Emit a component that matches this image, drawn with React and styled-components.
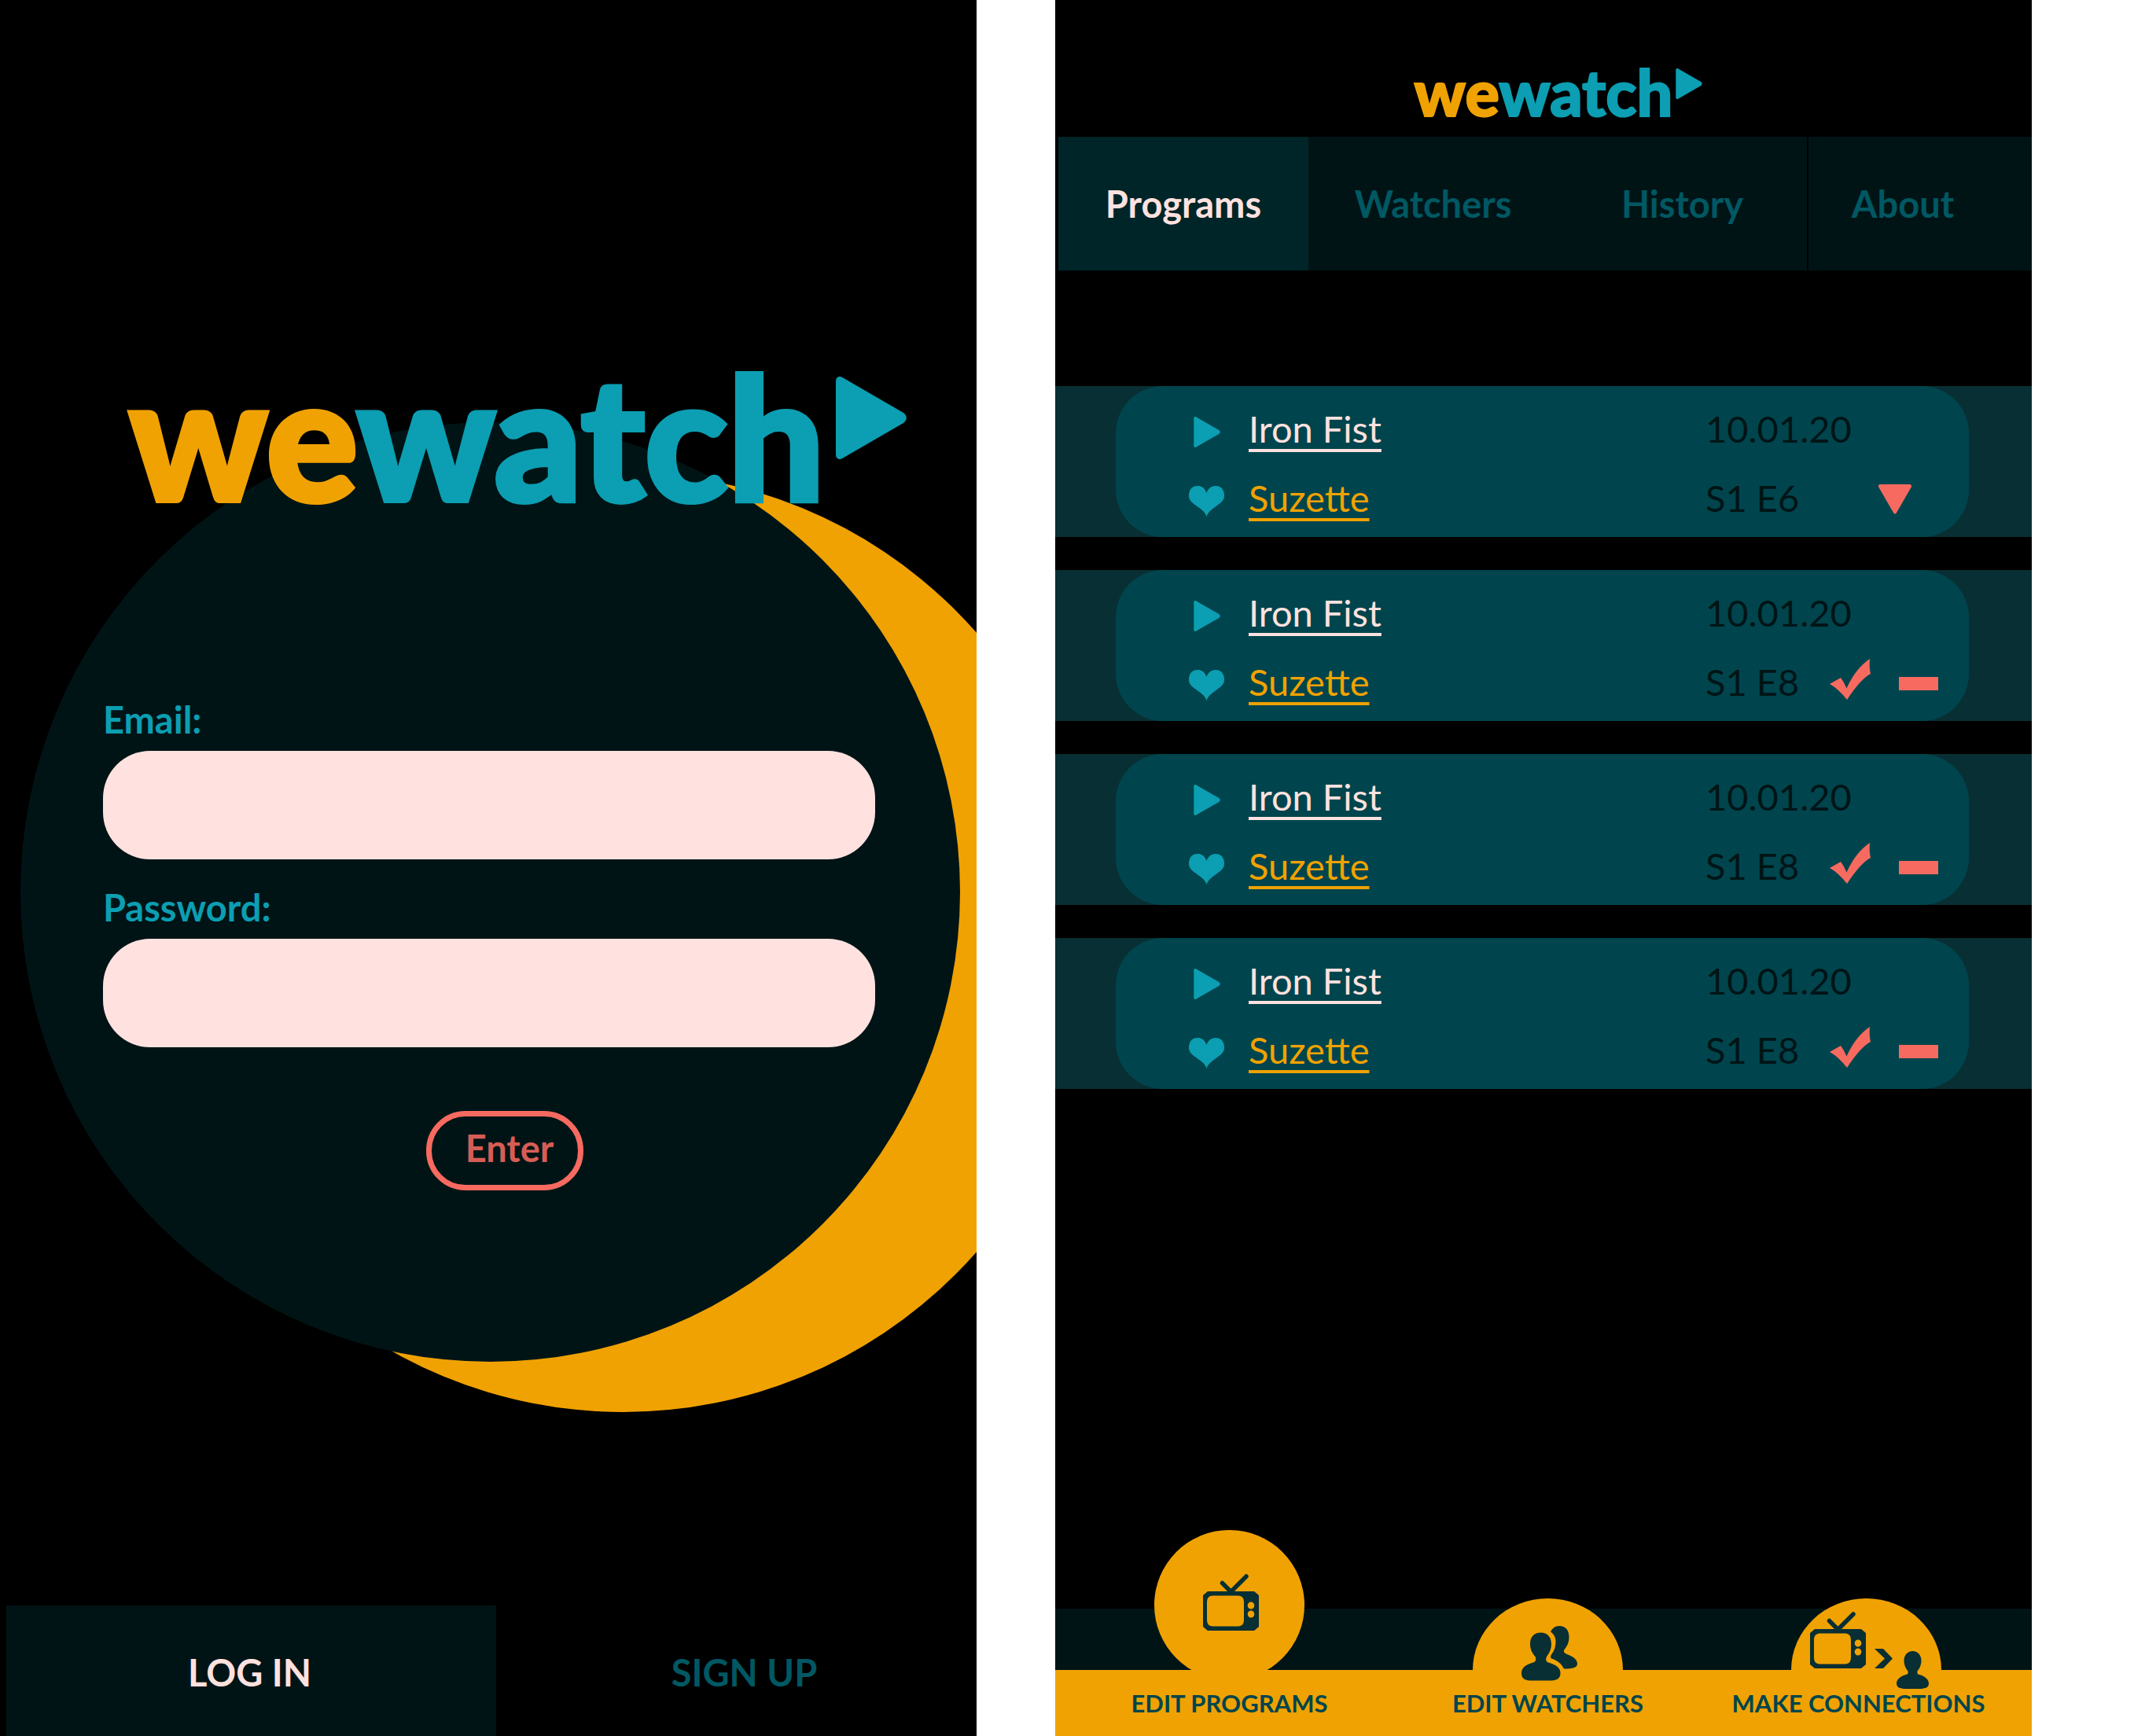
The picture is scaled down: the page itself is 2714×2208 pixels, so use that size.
import React from "react";
import styled, { createGlobalStyle, ThemeProvider } from "styled-components";

const theme = {
  ink: "#001416",
  strip: "#082f33",
  card: "#00454d",
  tab: "#002529",
  muted: "#005863",
  teal: "#0c9eb2",
  blush: "#ffe2df",
  coral: "#f76a60",
  coralDim: "#d65d55",
  amber: "#f0a202",
};

const GlobalStyle = createGlobalStyle`
  * { box-sizing: border-box; }
  body { margin: 0; background: #fff; font-family: Lato, "Open Sans", sans-serif; }
  button, input { font: inherit; }
  svg { display: block; flex: none; }
`;

const Page = styled.div`
  display: flex;
  gap: 100px;
  min-height: 100vh;
  padding-right: 130px;
`;

const Screen = styled.main`
  flex: 1;
  min-width: 0;
  display: flex;
  flex-direction: column;
  overflow: hidden;
  background: #000;
  font-size: 47px;
  line-height: 54px;
`;

/* ---------- logo ---------- */

const LogoRow = styled.div`
  position: relative;
  display: flex;
  justify-content: center;
  gap: ${(p) => (p.$large ? 14 : 4)}px;
  padding-left: ${(p) => (p.$large ? 70 : 38)}px;
`;

const Wordmark = styled.h1`
  margin: 0;
  font-size: ${(p) => (p.$large ? 218 : 81)}px;
  line-height: 1;
  font-weight: 900;
  color: ${(p) => p.theme.teal};
  -webkit-text-stroke: ${(p) => (p.$large ? 6 : 2)}px currentColor;
`;

const We = styled.span`
  color: ${(p) => p.theme.amber};
`;

const LogoArrow = styled.span`
  padding-top: ${(p) => (p.$large ? 35 : 11)}px;
`;

const PlayIcon = ({ width = 34, height = 39 }) => (
  <svg width={width} height={height} viewBox="0 0 90 105" fill={theme.teal} aria-hidden="true">
    <path d="M0 6C0 0 5 -2 10 2L86 46C91 50 91 55 86 59L10 103C5 107 0 105 0 99Z" />
  </svg>
);

function Logo({ large }) {
  return (
    <LogoRow $large={large}>
      <Wordmark $large={large}>
        <We>we</We>watch
      </Wordmark>
      <LogoArrow $large={large}>
        {large ? <PlayIcon width={90} height={105} /> : <PlayIcon />}
      </LogoArrow>
    </LogoRow>
  );
}

/* ---------- login screen ---------- */

const LoginBody = styled.div`
  padding: 444px 21px 0 26px;
`;

const Moon = styled.form`
  display: flex;
  flex-direction: column;
  gap: 34px;
  width: 100%;
  aspect-ratio: 1;
  margin-top: -125px;
  padding: 351px 108px 0 105px;
  border-radius: 50%;
  background: ${(p) => p.theme.ink};
  box-shadow: 169px 64px 0 ${(p) => p.theme.amber};
`;

const Field = styled.label`
  display: flex;
  flex-direction: column;
  gap: 13px;
  color: ${(p) => p.theme.teal};
  font-weight: 700;
`;

const TextBox = styled.input`
  width: 100%;
  height: 138px;
  padding: 0 48px;
  border: 0;
  border-radius: 60px;
  background: ${(p) => p.theme.blush};
  color: ${(p) => p.theme.ink};
`;

const EnterButton = styled.button`
  align-self: center;
  width: 200px;
  height: 101px;
  margin: 47px 0 0 40px;
  padding: 0 0 8px 12px;
  border: 7px solid ${(p) => p.theme.coral};
  border-radius: 50px;
  background: transparent;
  color: ${(p) => p.theme.coralDim};
  font-weight: 700;
  line-height: 54px;
`;

const AuthTabs = styled.nav`
  display: grid;
  grid-template-columns: 623fr 611fr;
  margin-top: auto;
  padding-left: 8px;
`;

const AuthTab = styled.button`
  height: 166px;
  border: 0;
  padding: 4px 4px 0 0;
  background: ${(p) => (p.$active ? p.theme.ink : "transparent")};
  color: ${(p) => (p.$active ? p.theme.blush : p.theme.muted)};
  font-weight: 700;

  &:last-child {
    padding-left: 24px;
  }
`;

/* ---------- programs screen ---------- */

const Header = styled.header`
  height: 174px;
  padding-top: 76px;
`;

const TopNav = styled.nav`
  display: grid;
  grid-template-columns: 318fr 317fr 317fr 286fr;
  padding-left: 4px;
`;

const NavLink = styled.a`
  display: flex;
  align-items: center;
  justify-content: center;
  height: 170px;
  background: ${(p) => (p.$active ? p.theme.tab : p.theme.ink)};
  color: ${(p) => (p.$active ? p.theme.blush : p.theme.muted)};
  font-weight: 700;
  text-decoration: none;

  &:last-child {
    border-left: 2px solid #000;
    padding-right: 44px;
  }
`;

const List = styled.ul`
  display: flex;
  flex-direction: column;
  gap: 42px;
  margin: 147px 0 0;
  padding: 0;
  list-style: none;
`;

const Strip = styled.li`
  padding: 0 80px 0 77px;
  background: ${(p) => p.theme.strip};
`;

const Card = styled.article`
  padding: 10px 0 6px 93px;
  border-radius: 60px;
  background: ${(p) => p.theme.card};
`;

const Line = styled.div`
  display: grid;
  grid-template-columns: 45px 1fr 335px;
  column-gap: 31px;
  height: 88px;
  line-height: 88px;
`;

const LineIcon = styled.span`
  display: grid;
  place-items: center;
  padding-top: 8px;
`;

const TitleLink = styled.a`
  justify-self: start;
  color: ${(p) => (p.$person ? p.theme.amber : p.theme.blush)};
  text-decoration: underline;
  text-decoration-thickness: 4px;
  text-underline-offset: 8px;
  text-decoration-skip-ink: none;
`;

const Meta = styled.div`
  display: flex;
  align-items: center;
  color: ${(p) => p.theme.ink};
`;

const Episode = styled.span`
  width: 157px;
`;

const Actions = styled.span`
  display: flex;
  flex: 1;
  align-items: center;
  justify-content: flex-end;
  gap: 36px;
  padding-right: ${(p) => (p.$single ? 73 : 39)}px;
`;

const IconButton = styled.button`
  display: block;
  padding: 0;
  border: 0;
  background: none;
`;

const HeartIcon = () => (
  <svg width="45" height="39" viewBox="0 0 45 39" fill={theme.teal} aria-hidden="true">
    <path d="M22.5 39C20.5 32.5 15 29.5 8.500 24.500C3 20.500 0 17.500 0 12.500C0 4.500 4.500 0 11 0C17 0 21 4 22.500 9C24 4 28 0 34 0C40.500 0 45 4.500 45 12.500C45 17.500 42 20.500 36.500 24.500C30 29.500 24.500 32.500 22.500 39Z" />
  </svg>
);

const DownIcon = () => (
  <svg width="42" height="42" viewBox="0 -4 42 42" fill={theme.coral} aria-hidden="true">
    <path d="M2.500 0H39.500C42 0 42.500 2 41.500 4L23 36C22 38 20 38 19 36L0.500 4C-0.500 2 0 0 2.500 0Z" />
  </svg>
);

const CheckIcon = () => (
  <svg width="52" height="58" viewBox="0 0 52 58" fill={theme.coral} aria-hidden="true">
    <path d="M0 32L14 24Q18.500 30 21.500 37.500Q33 12 51 0Q50 11 52 19Q39 26 22 52Q11 38 0 32Z" />
  </svg>
);

const MinusIcon = () => (
  <svg width="50" height="21" viewBox="0 -4 50 21" fill={theme.coral} aria-hidden="true">
    <rect width="50" height="17" />
  </svg>
);

const programs = [
  { id: 1, title: "Iron Fist", watcher: "Suzette", date: "10.01.20", episode: "S1 E6", open: false },
  { id: 2, title: "Iron Fist", watcher: "Suzette", date: "10.01.20", episode: "S1 E8", open: true },
  { id: 3, title: "Iron Fist", watcher: "Suzette", date: "10.01.20", episode: "S1 E8", open: true },
  { id: 4, title: "Iron Fist", watcher: "Suzette", date: "10.01.20", episode: "S1 E8", open: true },
];

function ProgramRow({ program }) {
  return (
    <Strip>
      <Card>
        <Line>
          <LineIcon><PlayIcon /></LineIcon>
          <TitleLink href="#program">{program.title}</TitleLink>
          <Meta>{program.date}</Meta>
        </Line>
        <Line>
          <LineIcon><HeartIcon /></LineIcon>
          <TitleLink href="#watcher" $person>{program.watcher}</TitleLink>
          <Meta>
            <Episode>{program.episode}</Episode>
            {program.open ? (
              <Actions>
                <IconButton aria-label="Mark watched"><CheckIcon /></IconButton>
                <IconButton aria-label="Remove"><MinusIcon /></IconButton>
              </Actions>
            ) : (
              <Actions $single>
                <IconButton aria-label="Expand"><DownIcon /></IconButton>
              </Actions>
            )}
          </Meta>
        </Line>
      </Card>
    </Strip>
  );
}

/* ---------- footer ---------- */

const Footer = styled.nav`
  display: grid;
  grid-template: 162px / repeat(3, 1fr);
  align-items: end;
  margin-top: auto;
  padding: 0 8px 0 19px;
  background: linear-gradient(${(p) => p.theme.ink} 78px, ${(p) => p.theme.amber} 78px);
`;

const FooterLink = styled.a`
  display: flex;
  flex-direction: column;
  align-items: center;
  color: ${(p) => p.theme.card};
  text-decoration: none;
`;

const FooterLabel = styled.span`
  font-size: 31px;
  line-height: 84px;
  font-weight: 700;
  padding-right: ${(p) => (p.$wide ? 20 : 0)}px;
`;

const RoundBubble = styled.span`
  display: flex;
  justify-content: center;
  width: 191px;
  height: 191px;
  margin-bottom: -13px;
  padding: 56px 0 0 4px;
  border-radius: 50%;
  background: ${(p) => p.theme.amber};
`;

const DomeBubble = styled.span`
  display: flex;
  justify-content: center;
  align-items: flex-start;
  width: 191px;
  height: 91px;
  padding: 35px 0 0 4px;
  border-radius: 50% 50% 0 0 / 100% 100% 0 0;
  background: ${(p) => p.theme.amber};
`;

const ConnectBubble = styled(DomeBubble)`
  align-items: flex-end;
  justify-content: flex-start;
  padding: 0 0 2px 24px;
`;

const ArrowSlot = styled.span`
  margin: 0 5px 0 11px;
`;

const PersonSlot = styled.span`
  margin-bottom: -26px;
`;

const TvIcon = () => (
  <svg width="71" height="72" viewBox="0 0 71 72" fill={theme.strip} aria-hidden="true">
    <path
      fillRule="evenodd"
      d="M6 22H65L71 27V67L65 72H6L0 67V27ZM14 27.500C7 27.500 5 30 5 37V57C5 64 7 66.500 14 66.500H43C50 66.500 52 64 52 57V37C52 30 50 27.500 43 27.500ZM61 35.500A4.300 4.500 0 1 0 61 44.500A4.300 4.500 0 1 0 61 35.500ZM61 46.500A4.300 4.500 0 1 0 61 55.500A4.300 4.500 0 1 0 61 46.500Z"
    />
    <path d="M24.500 11.500L35.500 22.500L55 3" fill="none" stroke={theme.strip} strokeWidth="5.500" strokeLinecap="round" />
  </svg>
);

const PeopleIcon = () => (
  <svg width="71" height="70" viewBox="0 0 71 70" fill={theme.strip} aria-hidden="true">
    <path d="M24.500 8.500C33 8.500 38 14 38 23C38 30 35 35 32 39C30.500 43 31 45 34 46.500C43 49 49.500 53 49.500 60C49.500 67 45 69.500 36 69.500H13C4 69.500 0 67 0 60C0 53 6 49 15 46.500C18.500 45 19 43 17.500 39C14 35 11 30 11 23C11 14 16 8.500 24.500 8.500Z" />
    <path d="M37 7.500C39 3 43 0 48 0C56 0 60.500 5.500 60.500 14C60.500 21 58 26 54.500 30C53 33 54.500 34.500 58 36C66 39 71 43 71 48C71 53 65 54.500 54 54.500C51 48 45 43.500 38 41.500C36.500 40 37 37 39 35C42 31 43.500 26 43.500 20C43.500 14 41 10 37 7.500Z" />
  </svg>
);

const PersonIcon = () => (
  <svg width="41" height="48" viewBox="0 0 41 48" fill={theme.strip} aria-hidden="true">
    <path d="M20.500 0C27 0 31.500 5 31.500 12C31.500 18 29 22.500 26.500 25.500C26 28 26.500 29.500 29 30C36 32 41 36 41 41C41 46 37 48 29 48H12C4 48 0 46 0 41C0 36 5 32 12 30C14.500 29.500 15 28 14.500 25.500C12 22.500 9.500 18 9.500 12C9.500 5 14 0 20.500 0Z" />
  </svg>
);

const ChevronIcon = () => (
  <svg width="23" height="25" viewBox="0 0 23 25" fill={theme.strip} aria-hidden="true">
    <path d="M0 0H11L23 12.500L11 25H0L13 12.500Z" />
  </svg>
);

/* ---------- screens ---------- */

function LoginScreen() {
  return (
    <Screen>
      <LoginBody>
        <Logo large />
        <Moon onSubmit={(e) => e.preventDefault()}>
          <Field>
            Email:
            <TextBox type="email" name="email" />
          </Field>
          <Field>
            Password:
            <TextBox type="password" name="password" />
          </Field>
          <EnterButton type="submit">Enter</EnterButton>
        </Moon>
      </LoginBody>
      <AuthTabs>
        <AuthTab type="button" $active>LOG IN</AuthTab>
        <AuthTab type="button">SIGN UP</AuthTab>
      </AuthTabs>
    </Screen>
  );
}

function ProgramsScreen() {
  return (
    <Screen>
      <Header>
        <Logo />
      </Header>
      <TopNav>
        <NavLink href="#programs" $active>Programs</NavLink>
        <NavLink href="#watchers">Watchers</NavLink>
        <NavLink href="#history">History</NavLink>
        <NavLink href="#about">About</NavLink>
      </TopNav>
      <List>
        {programs.map((program) => (
          <ProgramRow key={program.id} program={program} />
        ))}
      </List>
      <Footer>
        <FooterLink href="#edit-programs">
          <RoundBubble><TvIcon /></RoundBubble>
          <FooterLabel>EDIT PROGRAMS</FooterLabel>
        </FooterLink>
        <FooterLink href="#edit-watchers">
          <DomeBubble><PeopleIcon /></DomeBubble>
          <FooterLabel>EDIT WATCHERS</FooterLabel>
        </FooterLink>
        <FooterLink href="#make-connections">
          <ConnectBubble>
            <TvIcon />
            <ArrowSlot><ChevronIcon /></ArrowSlot>
            <PersonSlot><PersonIcon /></PersonSlot>
          </ConnectBubble>
          <FooterLabel $wide>MAKE CONNECTIONS</FooterLabel>
        </FooterLink>
      </Footer>
    </Screen>
  );
}

export default function App() {
  return (
    <ThemeProvider theme={theme}>
      <GlobalStyle />
      <Page>
        <LoginScreen />
        <ProgramsScreen />
      </Page>
    </ThemeProvider>
  );
}
